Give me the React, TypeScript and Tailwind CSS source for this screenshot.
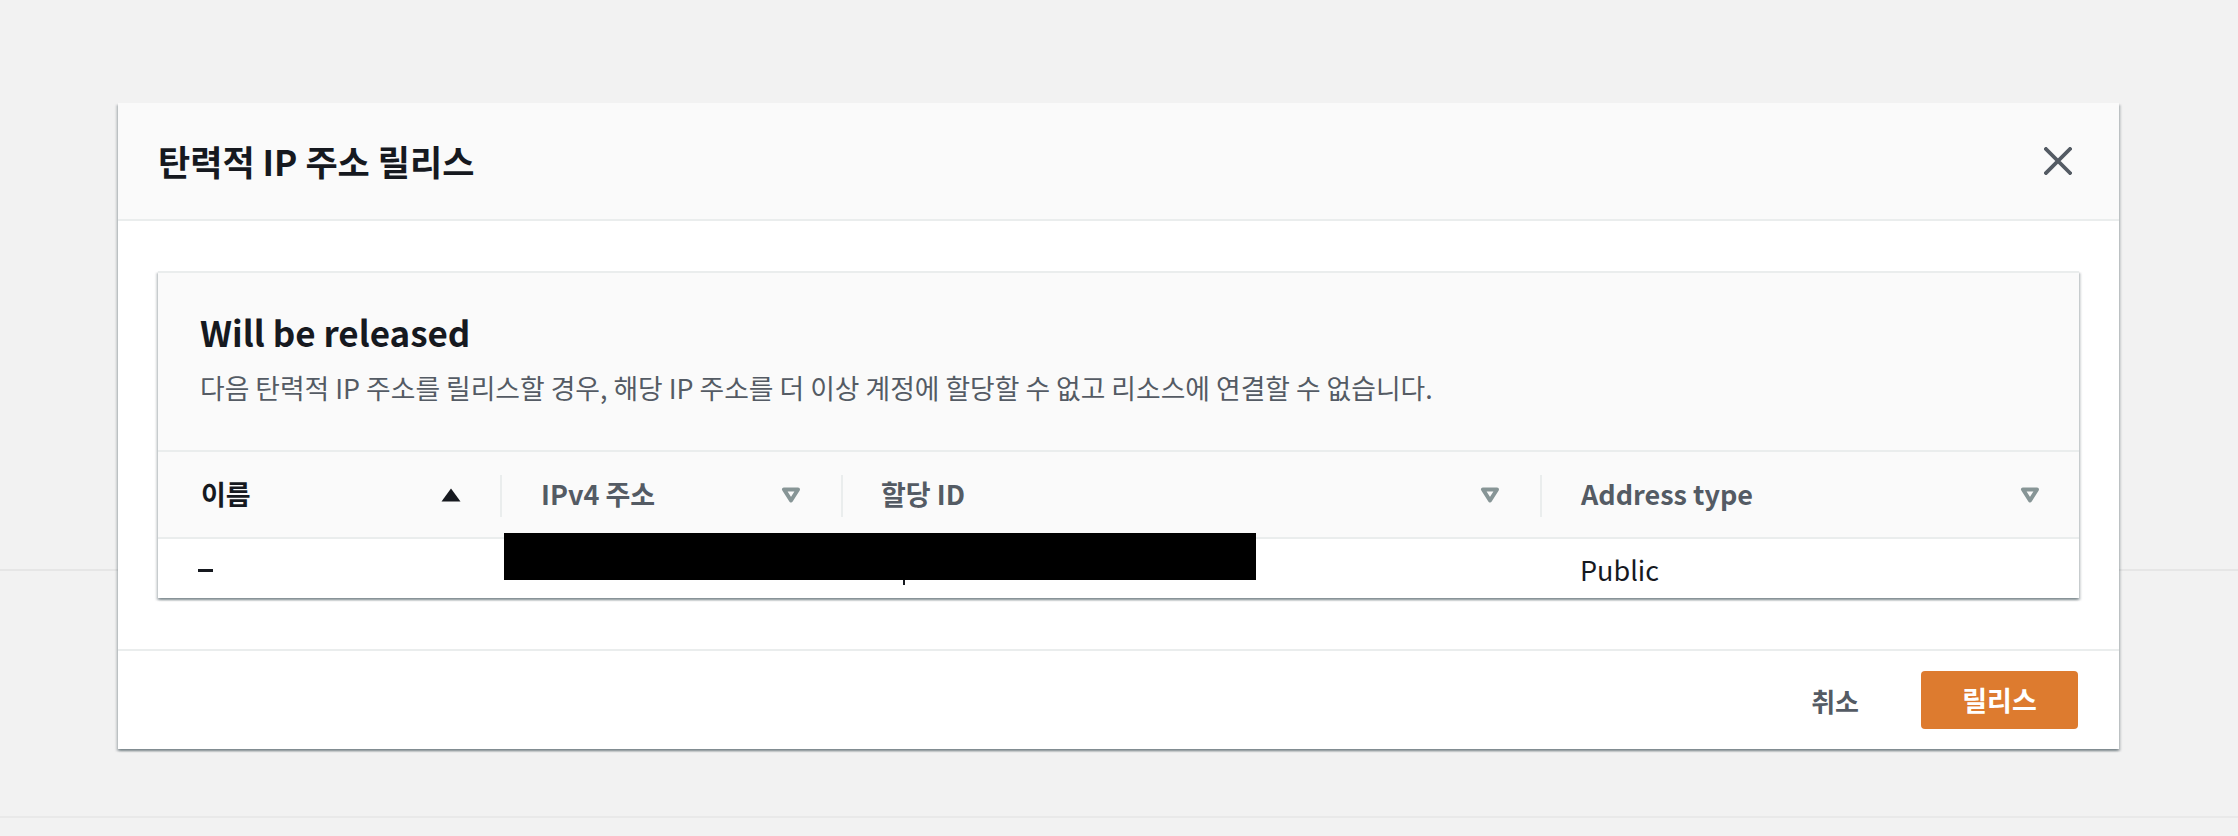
import React from "react";

const FONT = { fontFamily: '"Noto Sans CJK KR", "Noto Sans", sans-serif' };

function SortUp() {
  return (
    <svg width="20" height="14" viewBox="0 0 20 14">
      <path d="M10 0.5 L19.5 13.5 L0.5 13.5 Z" fill="#16191f" />
    </svg>
  );
}

function SortNone() {
  return (
    <svg width="20" height="16" viewBox="0 0 20 16">
      <path d="M3 2.5 L17 2.5 L10 13.5 Z" fill="none" stroke="#879596" strokeWidth="4" strokeLinejoin="round" />
    </svg>
  );
}

function CloseIcon() {
  return (
    <svg width="28" height="28" viewBox="0 0 28 28">
      <path d="M2 2 L26 26 M26 2 L2 26" stroke="#545b64" strokeWidth="3.8" strokeLinecap="square" />
    </svg>
  );
}

function HeaderCell({
  label,
  sorted,
  divider,
  className,
}: {
  label: string;
  sorted?: boolean;
  divider?: boolean;
  className: string;
}) {
  return (
    <div className={`relative flex items-center justify-between ${className}`}>
      {divider && <span className="absolute left-0 top-[23px] h-[42px] w-[2px] bg-[#eaeded]" />}
      <span className={`text-[27px] font-bold ${sorted ? "text-[#16191f]" : "text-[#545b64]"}`}>{label}</span>
      {sorted ? <SortUp /> : <SortNone />}
    </div>
  );
}

export default function App() {
  return (
    <div className="relative h-[836px] w-full overflow-hidden bg-[#f2f2f2]" style={FONT}>
      {/* page behind the overlay */}
      <div className="h-[571px] border-b-2 border-[#e6e6e6]" />
      <div className="h-[247px] border-b-2 border-[#e9e9e9]" />

      {/* modal */}
      <div className="absolute left-[118px] top-[103px] w-[2001px] bg-white shadow-[0_2px_2px_0_rgba(0,28,36,0.3),2px_2px_2px_0_rgba(0,28,36,0.15),-2px_2px_2px_0_rgba(0,28,36,0.15)]">
        <div className="flex h-[118px] items-center justify-between border-b-2 border-[#eaeded] bg-[#fafafa] pl-[40px] pr-[47px]">
          <h2 className="text-[35px] font-bold text-[#16191f]">탄력적 IP 주소 릴리스</h2>
          <button aria-label="close" className="flex items-center">
            <CloseIcon />
          </button>
        </div>

        <div className="px-[40px] pb-[51px] pt-[50px]">
          <div className="bg-white shadow-[0_2px_2px_0_rgba(0,28,36,0.3),2px_2px_2px_0_rgba(0,28,36,0.15),-2px_2px_2px_0_rgba(0,28,36,0.15)]">
            <div className="flex h-[179px] flex-col border-t-2 border-[#eaeded] bg-[#fafafa] pl-[42px] pt-[36px]">
              <h3 className="text-[35px] font-bold leading-[46px] text-[#16191f]">Will be released</h3>
              <p className="mt-[16px] text-[26.8px] leading-[34px] text-[#545b64]">
                다음 탄력적 IP 주소를 릴리스할 경우, 해당 IP 주소를 더 이상 계정에 할당할 수 없고 리소스에 연결할 수 없습니다.
              </p>
            </div>

            <div className="flex h-[87px] border-t-2 border-[#eaeded] bg-[#fafafa]">
              <HeaderCell label="이름" sorted className="w-[342px] pl-[43px] pr-[39px]" />
              <HeaderCell label="IPv4 주소" divider className="w-[341px] pl-[41px] pr-[40px]" />
              <HeaderCell label="할당 ID" divider className="w-[699px] pl-[40px] pr-[40px]" />
              <HeaderCell label="Address type" divider className="flex-1 pl-[41px] pr-[39px]" />
            </div>

            <div className="relative flex h-[61px] items-center border-t-2 border-[#eaeded] pt-[3px] text-[27px] text-[#16191f]">
              <div className="flex w-[342px] pl-[40px]">
                <span className="h-[3px] w-[15px] bg-[#16191f]" aria-label="–" />
              </div>
              <div className="w-[341px]" />
              <div className="w-[699px]" />
              <div className="flex-1 pl-[40px]">Public</div>
              <span className="absolute left-[346px] top-[-6px] h-[47px] w-[752px] bg-black" />
              <span className="absolute left-[745px] top-[41px] h-[5px] w-[2px] bg-[#16191f]" />
            </div>
          </div>
        </div>

        <div className="flex h-[100px] items-center justify-end gap-[62px] border-t-2 border-[#eaeded] pr-[41px]">
          <button className="text-[26px] font-bold text-[#545b64]">취소</button>
          <button className="h-[58px] w-[157px] rounded-[4px] bg-[#dd7b2f] text-[27px] font-bold text-white">
            릴리스
          </button>
        </div>
      </div>
    </div>
  );
}
